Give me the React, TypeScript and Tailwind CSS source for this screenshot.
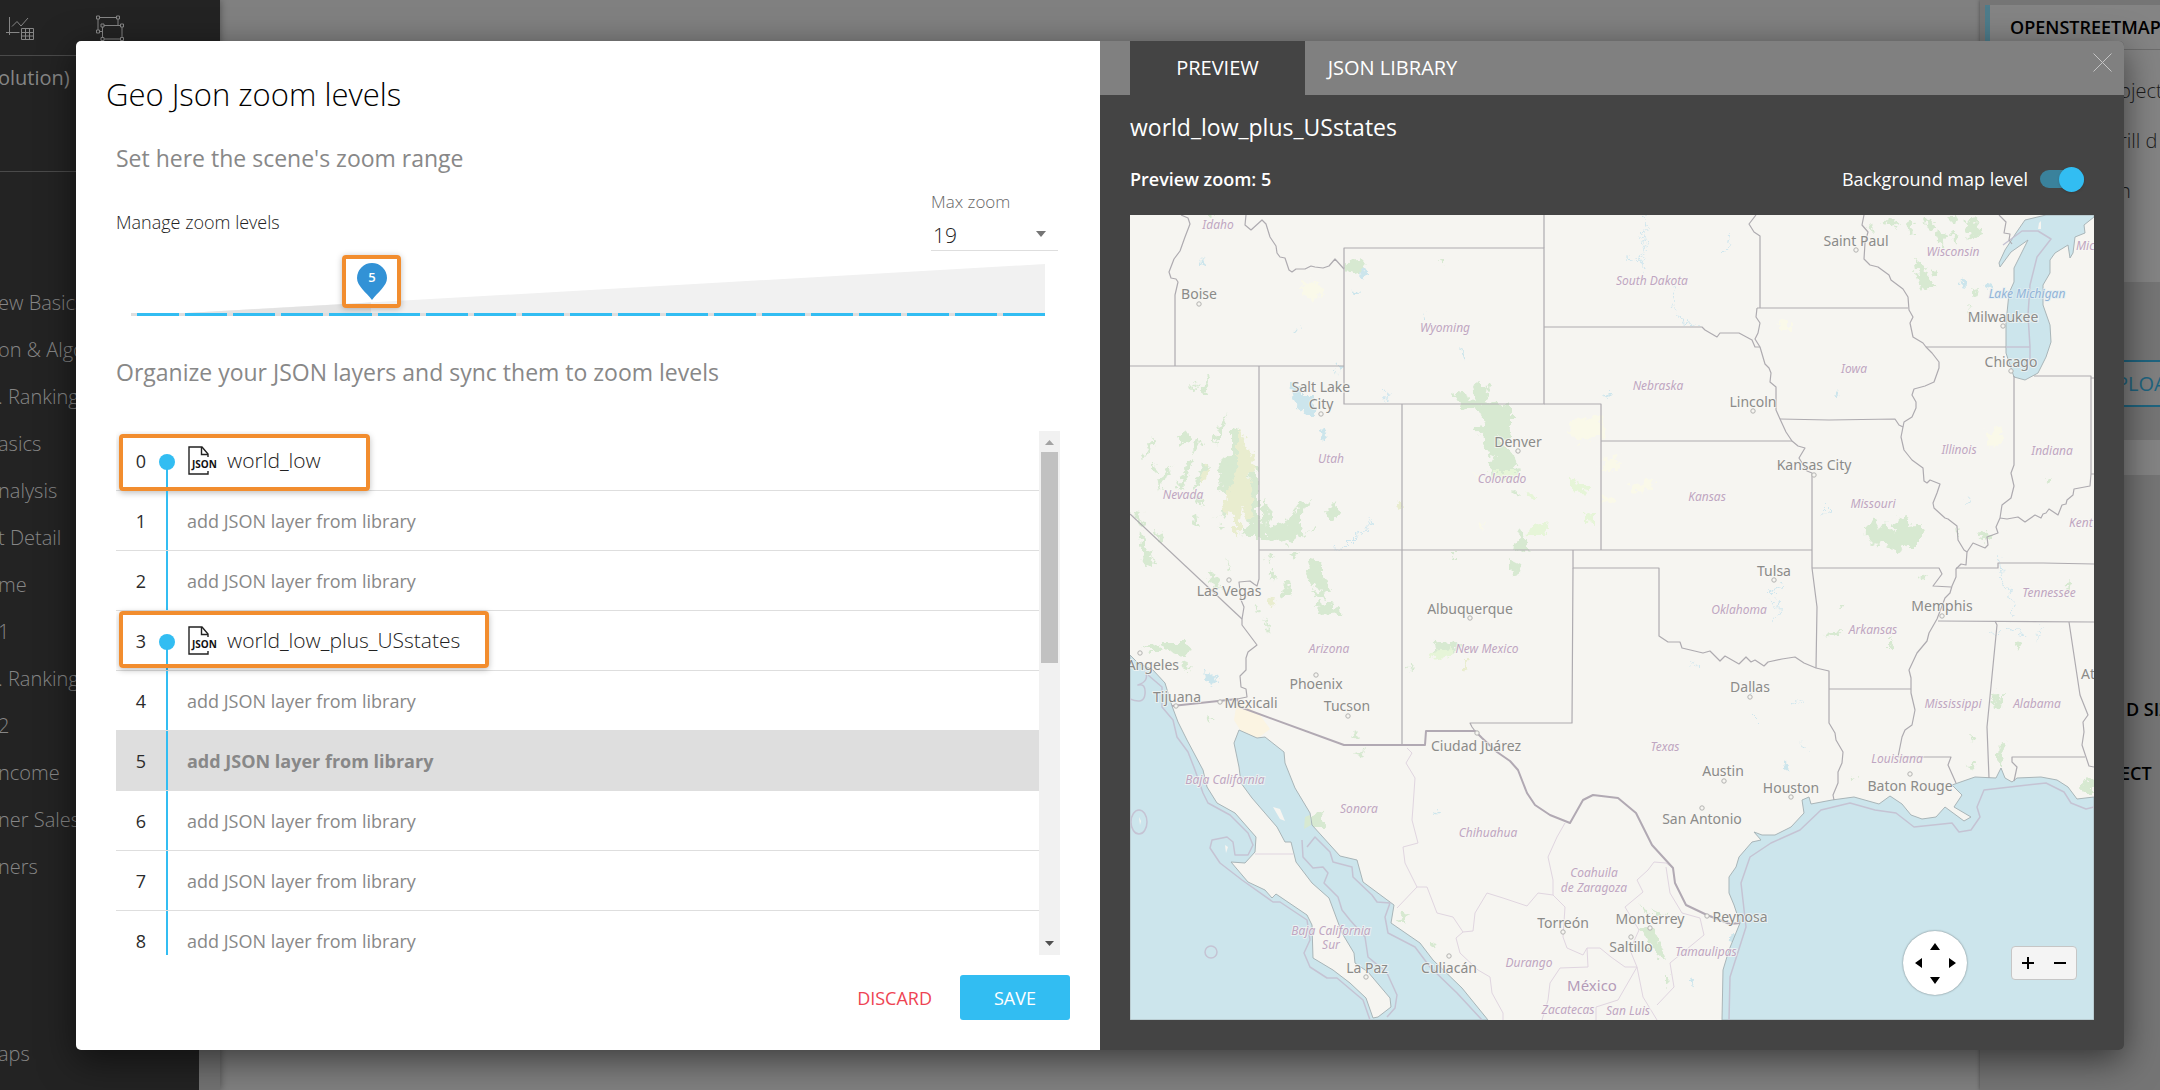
import { useState } from 'react';
import clsx from 'clsx';

const layers: Record<number, string> = { 0: 'world_low', 3: 'world_low_plus_USstates' };
const levels = [0, 1, 2, 3, 4, 5, 6, 7, 8];
const ACTIVE_LEVEL = 5;

const menuItems = [
  'ew Basics', 'on & Algo', '. Ranking', 'asics', 'nalysis', 't Detail', 'me',
  '1', '. Ranking', '2', 'ncome', 'ner Sales', 'ners',
];

/* ---------- map data ---------- */

const stateBorders = [
  'M51 0 58 3 60 9 55 22 50 36 44 44 39 57 41 63 46 64 48 67 45 80 45 151',
  'M116 0 115 10 121 15 132 5 136 9 140 22 146 31 147 38 150 42 155 43 159 55 162 57 166 54 175 54 181 51 185 52 193 53 199 51 205 44 214 54',
  'M214 33H414V189H214Z',
  'M414 0V33',
  'M0 151H214',
  'M129 151V364L127 371 124 369 120 366 109 367 111 385 114 392 112 404 112 410 118 418 127 430 118 437 116 443 116 455 110 461 111 472 116 474 117 482 107 484',
  'M272 189V530',
  'M414 189H471V335',
  'M129 335H682',
  'M471 226H662',
  'M0 299 112 404',
  'M443 335V353H529V421L538 427 550 427 552 433 573 438 580 436 590 446 595 441 609 449 616 442 621 447 625 445 634 451 638 447 652 444 665 442 674 448 686 453 699 456V508L705 518 706 525 713 537 712 548 708 557 708 568 703 580 704 585',
  'M443 353 442 508H340L342 512 345 516',
  'M626 0 619 9 624 17 630 21V93',
  'M627 93H778',
  'M734 0 732 10 738 17 735 28 734 44 740 50 748 52 759 60 761 65 773 74 778 82 779 95 783 102 780 108 783 122 793 128 796 132 802 138 809 147 809 153 804 167 795 171 784 174 782 180 786 187 786 193 782 202 774 207 773 212 771 222 774 235 782 245 793 253 794 266 797 268 800 265 810 269 807 278 803 288 804 293 815 303 818 304 827 311 828 325 834 335 837 337 836 350 831 349 826 354 826 362 822 371 820 378 815 383 807 404 799 418 797 426 787 438 779 455 781 463 781 478 785 495 782 510 775 515 772 522 770 532 768 542H821L818 550 826 568',
  'M627 93 626 102 630 108 628 118 625 124 630 132 635 149 639 153 641 158 640 167 646 172 646 195 650 204 656 217 662 226 668 231 675 233 669 243 677 256 682 258V353L687 392 686 453',
  'M414 112H572L575 115 587 122 590 118H609L622 125 625 132 630 132',
  'M650 204 699 205 765 204 769 210 773 212',
  'M796 132H876',
  'M884 161V250L881 258 884 271 881 283 872 290 870 303 866 312 868 318 857 322 858 330 855 333 843 328 837 337',
  'M904 161H961V259L960 271 944 274 943 280 937 285 936 289 932 290 928 300 919 294 916 298 913 299 911 303 905 300 895 307 888 302 877 304 870 303',
  'M961 259H964M961 163H964',
  'M826 353H868V348H913L964 349',
  'M682 353H809L812 359 803 371 821 372',
  'M699 474H781',
  'M808 406 964 407',
  'M865 406 867 410 857 512 859 563',
  'M939 407 950 480 958 500 953 507 954 517 952 530 959 551 964 552',
  'M955 542H882V547L887 552 884 566',
  'M869 0 876 7 874 18 880 19 879 25 882 29',
];

const countryBorder =
  'M42 491 107 484 110 492 214 530H295L296 516H345L352 523 367 537 380 546 388 555 397 578 405 590 420 600 440 608 453 585 463 580 488 583 506 598 522 630 543 653 545 668 556 690 577 700 600 709 610 708';

const mexicoBorders = [
  'M277 533 282 538 276 548 285 563 283 592 282 605 288 628 273 632 275 648 287 672 267 693',
  'M287 672H297L307 698 323 702 333 717 343 716 345 698 357 678 373 683 397 691 408 678 423 680 423 665 418 642 427 622 435 608',
  'M333 717 326 723 330 738 348 755 360 762 362 778 373 798V805',
  'M423 680 435 692 433 722 437 733 453 740 457 733 458 752 430 753 420 768 418 785 412 805',
  'M457 733H470L481 742 495 752 507 752 513 782 527 805',
  'M543 653 536 648 524 647 518 655 507 665 513 677 495 692 509 715 500 735 507 752 488 785 466 792 466 805',
  'M536 652 540 678 552 698 570 703 574 720 540 748 544 772 527 790',
  'M125 639H163',
];

const pacific =
  'M0 440 8 448 23 455 35 468 42 491 48 507 57 525 73 555 77 572 87 588 105 598 126 622 125 637 115 648 101 647 118 667 135 675 142 683 146 679 177 700 182 710 183 743 203 755 220 768 236 783 243 803 248 802 261 792 260 783 238 757 225 748 224 738 212 718 199 683 182 668 166 647 161 627 155 627 147 612 122 583 111 568 109 552 104 528 109 515 127 523 135 522 154 537 155 548 165 573 180 598 182 610 210 641 227 645 233 667 264 690 261 708 290 728 303 745 332 773 358 805H0Z';
const gulf =
  'M592 805 593 755 599 735 610 708 604 690 599 678 599 662 606 652 609 642 622 627 631 625 624 617 632 620 645 620 661 612 674 598 672 585 679 582 681 589 702 585 724 582 749 589 760 581 772 589 781 600 792 604 806 602 815 592 834 606 841 602 824 592 832 580 822 570 845 562 866 563 871 553 875 563 882 567 887 563 911 562 927 565 938 572 947 584 964 582V805Z';
const lakeMichigan =
  'M895 5 916 0H964V2L954 10 955 18 945 22 943 38 940 43 938 30 925 38 920 45V58L913 70V90L920 110 921 127 916 142 908 158 895 165 884 162 876 138V108L879 78 884 67V53L898 25 881 37 870 52 869 48 875 35 886 18Z';

const maritime = [
  'M18 460 32 472V492L43 505 47 522 58 537 65 555 73 578 78 588 100 600 118 618 123 630 118 640H105L103 627 97 622 82 625 80 633 90 648 112 665 143 687H150L177 705 180 725 174 738 180 752 197 763 207 763 233 785 240 805',
  'M172 625 173 642 183 653 193 652 198 658 194 668 208 682 212 695 220 705 235 722 238 742 257 758 267 780 265 793 257 802',
  'M177 632 185 622 200 637 203 647 222 652 223 662 242 680 247 687 260 688 255 702 258 718 285 732 300 752 327 778 352 805',
  'M599 805 600 762 616 712 611 668 620 642 641 628 670 615 691 595 720 588 745 595 766 598 784 612 822 608 829 617 841 615 850 602 847 592 854 575 916 568 934 577 941 588 956 594 964 592',
  'M0 484Q14 490 15 479T8 470Q20 466 15 456',
  'M873 30 892 16 908 16 921 24 907 42 900 70 898 100 900 132 900 150M876 132H900',
];

const forests = [
  'M216 47 230 46 236 50 230 60 218 56Z',
  'M322 178 330 176 345 186 343 172 352 167 358 172 356 186 382 190 382 214 378 226 368 222 384 240 388 256 376 262 358 256 364 244 355 232 352 222 344 213 355 206 348 194 334 196Z',
  'M102 214 108 212 114 232 108 248 104 290 110 312 120 312 116 296 122 252 128 256 128 304 142 312 155 306 172 308 176 320 156 328 136 322 116 322 112 314 98 290 88 262 92 246 102 240Z',
  'M88 248 98 246 102 270 90 266ZM58 246 64 244 52 276 48 270ZM72 248 78 250 68 272 60 284ZM44 250 36 262 30 276 28 264ZM92 300 102 282 96 300 82 304Z',
  'M22 246 28 250 26 258 22 254ZM12 242 22 222 24 226 14 244ZM60 232 68 224 72 230 64 238ZM60 304 66 298 68 312ZM86 312 96 310 90 316ZM66 278 74 284 74 292 68 288Z',
  'M77 162 80 164 76 178 72 178ZM60 170 68 172 64 178ZM98 196 94 210 86 230 84 222ZM48 222 56 216 60 222 52 232Z',
  'M184 344 192 350 192 362 200 376 196 380 190 374 178 366 176 356ZM182 374 196 378 194 384 184 380ZM186 386 206 392 214 398 190 400Z',
  'M170 288 182 286 170 302 160 318 152 314ZM134 282 138 296 142 300 138 314 130 300ZM194 300 206 286 210 300 200 304ZM178 318 184 312 186 316Z',
  'M76 356 88 364 92 376 82 370ZM12 316 16 326 24 350 18 352 10 336ZM98 345 100 355 96 358ZM0 296 10 298 16 312 6 304ZM24 316 32 322 28 328Z',
  'M140 356 146 358 144 366ZM152 372 158 366 160 380 154 384ZM136 340 144 342 138 346ZM158 340 170 336 164 344ZM124 390 128 394 126 398ZM134 402 138 412 136 416Z',
  'M30 428 56 428 62 438 52 442 38 436ZM52 446 60 450 58 456 50 454ZM10 432 28 430 34 436 20 436ZM76 500 82 504 78 508Z',
  'M302 428 320 426 332 430 322 440 304 442ZM276 454 282 450 280 456ZM224 516 228 520 222 522ZM222 540 236 536 232 542Z',
  'M386 326 392 316 396 322 394 330 402 338 384 336ZM380 345 390 350 388 360 382 358ZM318 338 326 338 326 342ZM382 278 388 276 386 282ZM310 44 316 44 314 50Z',
  'M735 312 745 302 750 314 756 306 762 318 768 304 776 302 780 312 794 310 788 330 776 330 770 338 760 330 752 328 744 330 736 322Z',
  'M784 44 792 50 800 66 806 72 794 76 788 66ZM802 50 808 56 804 62ZM792 8 800 4 806 12 800 16ZM804 24 810 14 818 22 812 30ZM820 18 830 20 826 30ZM754 8 762 2 768 12ZM834 6 848 4 850 20 838 24ZM738 10 744 12 740 16ZM776 6 784 8 780 14ZM816 2 826 2 824 10Z',
  'M778 10 786 18 780 22ZM840 76 848 74 846 84ZM836 90 842 92 838 96ZM758 96 762 98ZM708 386 716 388 710 392ZM694 418 712 416 704 422ZM760 420 764 432 760 436ZM788 362 798 358 794 366Z',
  'M180 602 192 594 194 612 182 612ZM870 528 876 530 872 550 868 550ZM950 568 958 562 964 566V578L954 578ZM884 425 892 428 888 436ZM840 520 846 522 842 528ZM836 550 846 548 842 556ZM720 560 728 564 722 566Z',
  'M510 690 518 696 522 704ZM522 694 536 700 526 702ZM510 712 520 710 528 726 536 746 528 742 518 724ZM536 760 542 766 536 772ZM266 702 280 698 274 706 268 706ZM300 726 306 730 302 736Z',
  'M826 312 830 316 828 324ZM846 318 856 316 862 320 856 326ZM862 486 866 478 870 486 874 478 874 492 864 494ZM75 0H84L80 4ZM916 262 922 264 918 268ZM934 370 942 368 938 376Z',
];
const ochre = [
  'M108 214 112 218 118 236 124 246 120 262 124 300 116 304 112 290 108 325 104 318 104 300 92 292 100 270 108 250Z',
  'M76 250 80 256 74 270 70 262ZM266 284 272 292 268 294ZM136 380 146 386 142 392ZM334 444 338 448 334 456Z',
];
const farmland = [
  'M106 492 112 488 130 500 140 514 128 523 112 518 104 505Z',
];
const paleFields = [
  'M172 66 190 68 194 78 184 84 172 78ZM440 206 470 200 474 220 450 228 438 218ZM472 244 488 242 490 256 474 256ZM648 106 660 104 660 116 648 116ZM856 216 872 212 872 230 858 232Z',
  'M472 280 488 282 484 290 472 288ZM340 258 352 260 346 264ZM350 306 356 308 352 314ZM500 270 524 264 520 274 504 278Z',
];
const lightGreens = [
  'M358 256 386 256 386 264 360 264ZM440 263 446 266 460 272 460 278 440 276ZM455 299 465 297V309L455 308ZM402 312 416 308 414 320 398 320Z',
  'M302 436 324 434 318 442 298 444ZM396 280 404 276 402 284Z',
];
const lakes = [
  'M160 165 168 170 172 180 185 180 184 200 174 200 165 190Z',
  'M232 54 238 56 238 62 230 60ZM190 214 198 216 192 226ZM163 120 170 112 168 118ZM72 42 73 52 70 52ZM206 148 210 150 208 158ZM226 72 228 80 224 80Z',
  'M72 456 86 464 84 470 76 466ZM296 98 298 104 294 104ZM330 132 334 142 332 146ZM92 490H98M102 492H108',
  'M839 282 840 288 837 290ZM705 176 713 180 708 181ZM472 178 482 180 480 182ZM305 592 308 596 306 600Z',
  'M670 528 682 540 674 534ZM652 545 660 552 656 554ZM600 720 608 725 602 735ZM560 760 564 765 562 774ZM830 70 834 62 836 72ZM854 70 862 66 860 78Z',
];
const rivers = [
  'M514 0 518 10 512 20 516 30 510 42 514 55 512 60M498 44 512 46 516 38',
  'M542 70 546 84 542 92 552 106 570 112',
  'M243 304 236 314 226 322 218 330 204 336',
  'M258 176 256 190M650 400 648 384 640 376 652 372',
  'M868 340 870 350 872 366 880 378 884 400',
  'M640 385 650 398 642 408M600 20 596 36 592 40M692 288 700 296 690 300',
  'M862 420 880 412 896 422M905 428 912 410M560 450 568 448M620 480 632 470M660 490 672 486M622 500 632 510',
];

type Place = { name: string; x: number; y: number; dx?: number; dy?: number; anchor?: 'start' | 'end' };

const cities: Place[] = [
  { name: 'Boise', x: 69, y: 84, dx: 69, dy: 89 },
  { name: 'Salt Lake', x: 191, y: 177 },
  { name: 'City', x: 191, y: 194, dx: 191, dy: 199 },
  { name: 'Denver', x: 388, y: 232, dx: 388, dy: 236 },
  { name: 'Las Vegas', x: 99, y: 381, dx: 99, dy: 365 },
  { name: 'Albuquerque', x: 340, y: 399, dx: 340, dy: 403 },
  { name: 'Saint Paul', x: 726, y: 31, dx: 726, dy: 35 },
  { name: 'Milwaukee', x: 873, y: 107, dx: 873, dy: 111 },
  { name: 'Chicago', x: 881, y: 152, dx: 881, dy: 156 },
  { name: 'Lincoln', x: 623, y: 192, dx: 623, dy: 196 },
  { name: 'Kansas City', x: 684, y: 255, dx: 684, dy: 260 },
  { name: 'Tulsa', x: 644, y: 361, dx: 644, dy: 365 },
  { name: 'Memphis', x: 812, y: 396, dx: 812, dy: 401 },
  { name: 'Angeles', x: 49, y: 455, dx: 10, dy: 438, anchor: 'end' },
  { name: 'Tijuana', x: 47, y: 487, dx: 46, dy: 491 },
  { name: 'Mexicali', x: 121, y: 493, dx: 90, dy: 487 },
  { name: 'Phoenix', x: 186, y: 474, dx: 186, dy: 460 },
  { name: 'Tucson', x: 217, y: 496, dx: 218, dy: 501 },
  { name: 'Ciudad Juárez', x: 346, y: 536, dx: 347, dy: 518 },
  { name: 'Torreón', x: 433, y: 713, dx: 433, dy: 717 },
  { name: 'La Paz', x: 237, y: 758, dx: 236, dy: 762 },
  { name: 'Culiacán', x: 319, y: 758, dx: 319, dy: 741 },
  { name: 'Dallas', x: 620, y: 477, dx: 620, dy: 482 },
  { name: 'At', x: 951, y: 464, anchor: 'start' },
  { name: 'Austin', x: 593, y: 561, dx: 594, dy: 566 },
  { name: 'Houston', x: 661, y: 578, dx: 661, dy: 582 },
  { name: 'Baton Rouge', x: 780, y: 576, dx: 780, dy: 559 },
  { name: 'San Antonio', x: 572, y: 609, dx: 572, dy: 593 },
  { name: 'Monterrey', x: 520, y: 709, dx: 520, dy: 713 },
  { name: 'Reynosa', x: 610, y: 707, dx: 577, dy: 701 },
  { name: 'Saltillo', x: 501, y: 737, dx: 501, dy: 722 },
];

const regions: Place[] = [
  { name: 'Idaho', x: 88, y: 14 },
  { name: 'Wyoming', x: 315, y: 117 },
  { name: 'Nevada', x: 53, y: 284 },
  { name: 'Utah', x: 201, y: 248 },
  { name: 'Colorado', x: 372, y: 268 },
  { name: 'South Dakota', x: 522, y: 70 },
  { name: 'Wisconsin', x: 823, y: 41 },
  { name: 'Mic', x: 946, y: 35, anchor: 'start' },
  { name: 'Iowa', x: 724, y: 158 },
  { name: 'Nebraska', x: 528, y: 175 },
  { name: 'Kansas', x: 577, y: 286 },
  { name: 'Missouri', x: 743, y: 293 },
  { name: 'Illinois', x: 829, y: 239 },
  { name: 'Indiana', x: 922, y: 240 },
  { name: 'Kent', x: 939, y: 312, anchor: 'start' },
  { name: 'Oklahoma', x: 609, y: 399 },
  { name: 'Tennessee', x: 919, y: 382 },
  { name: 'Arizona', x: 199, y: 438 },
  { name: 'New Mexico', x: 357, y: 438 },
  { name: 'Baja California', x: 95, y: 569 },
  { name: 'Sonora', x: 229, y: 598 },
  { name: 'Chihuahua', x: 358, y: 622 },
  { name: 'Coahuila', x: 464, y: 662 },
  { name: 'de Zaragoza', x: 464, y: 677 },
  { name: 'Baja California', x: 201, y: 720 },
  { name: 'Sur', x: 201, y: 734 },
  { name: 'Durango', x: 399, y: 752 },
  { name: 'Zacatecas', x: 438, y: 799 },
  { name: 'San Luis', x: 498, y: 800 },
  { name: 'Arkansas', x: 743, y: 419 },
  { name: 'Mississippi', x: 823, y: 493 },
  { name: 'Alabama', x: 907, y: 493 },
  { name: 'Texas', x: 535, y: 536 },
  { name: 'Louisiana', x: 767, y: 548 },
  { name: 'Tamaulipas', x: 576, y: 741 },
];

function MapView() {
  return (
    <svg
      viewBox="0 0 964 805"
      preserveAspectRatio="xMidYMid slice"
      className="block h-full w-full bg-[#f6f5f1] font-['Noto_Sans',sans-serif]"
      aria-label="Map preview"
    >
      <defs>
        {/* roughens the outlines of woods and lakes */}
        <filter id="rough" filterUnits="userSpaceOnUse" x="0" y="0" width="964" height="805">
          <feTurbulence type="fractalNoise" baseFrequency="0.14" numOctaves="3" seed="4" result="noise" />
          <feDisplacementMap in="SourceGraphic" in2="noise" scale="14" xChannelSelector="R" yChannelSelector="G" />
        </filter>
      </defs>
      <g filter="url(#rough)">
        <g fill="#faf9e9">{paleFields.map((d) => <path key={d} d={d} />)}</g>
        <g fill="#d7e9d1">{forests.map((d) => <path key={d} d={d} />)}</g>
        <g fill="#e9edcf">{ochre.map((d) => <path key={d} d={d} />)}</g>
        <g fill="#e6f5d8">{lightGreens.map((d) => <path key={d} d={d} />)}</g>
        <g fill="#cce5ec">{lakes.map((d) => <path key={d} d={d} />)}</g>
        <g fill="none" stroke="#cfe6ee">{rivers.map((d) => <path key={d} d={d} />)}</g>
      </g>
      <g fill="#fbf4e2">{farmland.map((d) => <path key={d} d={d} />)}</g>
      <g fill="#cce5ec" stroke="#a9b5b8" strokeWidth="1">
        <path d={pacific} />
        <path d={gulf} />
        <path d={lakeMichigan} />
      </g>
      <g fill="none" stroke="#c5c3d3" strokeWidth="1.5" strokeLinejoin="round">
        {maritime.map((d) => <path key={d} d={d} />)}
        <ellipse cx="9" cy="607" rx="8" ry="12" />
        <circle cx="81" cy="737" r="6" />
      </g>
      <g fill="#f6f5f1">
        <path d="M143 592 150 594 155 606 150 604ZM95 630 98 632 96 638ZM9 602 11 606 10 610ZM909 8 911 6 911 14 908 14Z" />
      </g>
      <g fill="#d7e9d1"><path d="M175 602 180 600 181 610 174 614Z" /></g>
      <g fill="none" stroke="#e0d5e0" strokeWidth="1">
        {mexicoBorders.map((d) => <path key={d} d={d} />)}
      </g>
      <g fill="none" stroke="#aeabb0" strokeWidth="1.2" strokeLinejoin="round">
        {stateBorders.map((d) => <path key={d} d={d} />)}
      </g>
      <path d={countryBorder} fill="none" stroke="#b1a9b3" strokeWidth="2" strokeLinejoin="round" />

      <g fill="#f6f5f1" stroke="#b3b3b1">
        {cities.map((c) => c.dx !== undefined && <circle key={c.name} cx={c.dx} cy={c.dy} r="2.2" />)}
      </g>
      <g fontSize="14" fill="#8b8b89" stroke="#f8f7f4" strokeWidth="2" strokeOpacity="0.7" paintOrder="stroke">
        {cities.map((c) => (
          <text key={c.name} x={c.x} y={c.y} textAnchor={c.anchor ?? 'middle'}>{c.name}</text>
        ))}
      </g>
      <g fontSize="12" fontStyle="italic" fill="#bfa6c1" stroke="#f8f7f4" strokeWidth="2" strokeOpacity="0.7" paintOrder="stroke">
        {regions.map((r) => (
          <text key={`${r.name}-${r.y}`} x={r.x} y={r.y} textAnchor={r.anchor ?? 'middle'}>{r.name}</text>
        ))}
        <text x="462" y="776" fontSize="15" fontStyle="normal" textAnchor="middle" fill="#b49bb8">México</text>
        <text x="897" y="83" textAnchor="middle" fill="#92b4d8" stroke="#e4eff2">Lake Michigan</text>
      </g>
    </svg>
  );
}

function JsonFileIcon() {
  return (
    <svg width="30" height="30" viewBox="0 0 30 30" className="shrink-0" aria-hidden="true">
      <path d="M20 11V8L14 1H1V28H20V25" fill="none" stroke="#222" strokeWidth="1.4" />
      <path d="M13.500 1V8.500H20" fill="none" stroke="#222" strokeWidth="1.4" />
      <text x="4" y="22" fontSize="10" fontWeight="700" fill="#111" className="font-['Open_Sans',sans-serif]">JSON</text>
    </svg>
  );
}

/* ---------- app behind the dialog ---------- */

function Sidebar() {
  return (
    <aside className="flex w-[220px] shrink-0 flex-col overflow-hidden bg-[#232323] text-[#868686] shadow-[0_0_8px_rgba(0,0,0,0.4)]">
      <div className="flex h-14 shrink-0 items-center border-b border-[#4a4a4a]">
        <svg width="28" height="26" viewBox="0 0 28 26" className="ml-1.5 shrink-0" fill="none" stroke="#868686" aria-hidden="true">
          <path d="M3.500 2V20M0 17.500H13.500M6 11.500 11 6.500 15 11 22 3" />
          <path d="M15.500 13.500H27.500V24.500H15.500ZM19.500 13.500V24.500M23.500 13.500V24.500M15.500 17.500H27.500M15.500 21H27.500" />
        </svg>
        <svg width="28" height="26" viewBox="0 0 28 26" className="ml-[62px] shrink-0" fill="#232323" stroke="#868686" aria-hidden="true">
          <path d="M2 2.500H22V10M2 2.500V16.500H6" />
          <path d="M6.500 10.500H26V24H6.500Z" />
          <path d="M.5 1H3.500V4H.5ZM20.500 1H23.500V4H20.500ZM.5 15H3.500V18H.5ZM5 9H8V12H5ZM24.500 9H27.500V12H24.500ZM5 22.500H8V25.500H5ZM24.500 22.500H27.500V25.500H24.500Z" />
        </svg>
      </div>
      <div className="-ml-0.5 h-[116px] shrink-0 border-b border-[#4a4a4a] pt-1 text-xl leading-9">olution)</div>
      <div className="flex min-h-0 flex-1">
        <ul className="-ml-0.5 w-[201px] pt-[107px] text-xl font-light">
          {menuItems.map((item, i) => (
            <li key={i} className="h-[47px] whitespace-nowrap leading-[47px]">{item}</li>
          ))}
          <li className="mt-[140px] h-[47px] leading-[47px]">aps</li>
        </ul>
        <div className="flex-1 bg-[#727272]" />
      </div>
    </aside>
  );
}

function PropertiesPanel() {
  return (
    <aside className="flex w-[180px] shrink-0 flex-col overflow-hidden whitespace-nowrap bg-[#757575] pt-[5px] text-[#1c1c1c] shadow-[0_0_4px_rgba(0,0,0,0.4)]">
      <div className="ml-[5px] flex h-[45px] shrink-0 items-center border-b border-l-[5px] border-[#6c6c6c] border-l-[#4d7c8b] bg-[#848484] pl-5 text-lg font-semibold text-black">
        OPENSTREETMAP
      </div>
      <div className="h-[232px] shrink-0 bg-[#848484] pt-4 pl-[139px] text-xl font-light leading-[50px]">
        <p>bject</p>
        <p>rill d</p>
        <p>n</p>
      </div>
      <div className="h-[158px] shrink-0 pt-[78px]">
        <button type="button" className="h-[47px] w-full overflow-hidden border-y-2 border-[#1f6580] bg-[#808080] pl-[136px] text-left text-xl text-[#1f6580]">
          PLOA
        </button>
      </div>
      <div className="h-[35px] shrink-0 bg-[#848484]" />
      <div className="flex flex-1 flex-col gap-8 pt-[218px] pl-[140px] text-lg font-semibold leading-8 text-black">
        <p className="pl-1.5">D SIZ</p>
        <p>ECT</p>
      </div>
    </aside>
  );
}

/* ---------- dialog, left side ---------- */

function ZoomSlider() {
  return (
    <div className="relative mr-[55px] ml-[55px]">
      <svg viewBox="0 0 914 62" preserveAspectRatio="none" className="block h-[62px] w-full" aria-hidden="true">
        <path d="M55 62 914 13V62Z" fill="#f1f1f1" />
        <path d="M55 62 240 51.500V62Z" fill="#e3e3e3" />
      </svg>
      <div className="flex h-[3px]">
        {Array.from({ length: 19 }).map((_, i) => (
          <div key={i} className="flex-1 border-l-[6px] border-[#dedede] bg-[#32bdf2]" />
        ))}
      </div>
      <div className="absolute top-1 left-[211px] flex h-[53px] w-[59px] justify-center rounded border-4 border-[#f28d2e] pt-1 shadow-[0_1px_6px_rgba(0,0,0,0.25)]">
        <svg width="30" height="38" viewBox="0 0 30 38" aria-label="Zoom level 5">
          <path d="M15 0A15 15 0 0 1 30 15C30 23 21 29 15 37C9 29 0 23 0 15A15 15 0 0 1 15 0Z" fill="#3292d6" />
          <text x="15" y="19" fontSize="13" fontWeight="600" textAnchor="middle" fill="#fff">5</text>
        </svg>
      </div>
    </div>
  );
}

function LayerRow({ level }: { level: number }) {
  const layer = layers[level];
  const active = level === ACTIVE_LEVEL;

  return (
    <li
      className={clsx(
        'relative flex h-15 shrink-0 items-center border-b border-[#dedede] text-lg',
        active && 'bg-[#dedede]',
      )}
    >
      <span className="w-[50px] text-center text-[#2b2b2b]">{level}</span>
      <span className="relative flex h-full w-0.5 shrink-0 flex-col justify-end">
        <span className={clsx('bg-[#32bdf2]', layer ? 'h-1/2' : 'h-full')} />
        {layer && <span className="absolute top-[23px] left-[-7px] size-4 rounded-full bg-[#32bdf2]" />}
      </span>
      {layer ? (
        <span className="ml-5 flex items-center gap-[9px] text-[21px] font-light text-[#222]">
          <JsonFileIcon />
          {layer}
        </span>
      ) : (
        <span className={clsx('ml-[19px] text-[#888]', active && 'font-bold')}>add JSON layer from library</span>
      )}
      {level === 0 && (
        <span className="absolute top-[3px] left-[3px] h-[57px] w-[251px] rounded border-4 border-[#f28d2e] shadow-[0_2px_6px_rgba(0,0,0,0.25)]" />
      )}
      {level === 3 && (
        <span className="absolute top-0 left-[3px] h-[57px] w-[370px] rounded border-4 border-[#f28d2e] shadow-[0_2px_6px_rgba(0,0,0,0.25)]" />
      )}
    </li>
  );
}

function Scrollbar() {
  return (
    <div className="flex w-[21px] shrink-0 flex-col items-center bg-[#f1f1f1]">
      <svg width="9" height="21" viewBox="0 0 9 21" aria-hidden="true"><path d="M0 14 4.500 9 9 14Z" fill="#a3a3a3" /></svg>
      <div className="h-[211px] w-[17px] bg-[#c1c1c1]" />
      <svg width="9" height="21" viewBox="0 0 9 21" className="mt-auto" aria-hidden="true"><path d="M0 7 4.500 12 9 7Z" fill="#505050" /></svg>
    </div>
  );
}

function LevelsPane() {
  return (
    <section className="flex min-w-0 flex-1 flex-col bg-white pt-[33px] pb-[30px]">
      <h1 className="px-[30px] text-[31px] font-light leading-10 text-black">Geo Json zoom levels</h1>
      <h2 className="mt-7 px-10 text-[23px] leading-8 text-[#888]">Set here the scene's zoom range</h2>

      <div className="mt-4 flex items-end justify-between pr-[42px] pl-10">
        <p className="mb-[15px] text-lg font-light leading-7 text-[#222]">Manage zoom levels</p>
        <div className="w-[127px]">
          <label htmlFor="max-zoom" className="block text-[17px] font-light leading-6 text-[#666]">Max zoom</label>
          <div className="relative mt-[5px]">
            <select
              id="max-zoom"
              defaultValue="19"
              className="block h-8 w-full appearance-none border-b border-[#dedede] bg-transparent pl-0.5 text-[21px] font-light leading-7 text-[#222]"
            >
              <option>19</option>
              <option>18</option>
            </select>
            <svg width="10" height="6" viewBox="0 0 10 6" className="pointer-events-none absolute top-3 right-3" aria-hidden="true">
              <path d="M0 0H10L5 6Z" fill="#757575" />
            </svg>
          </div>
        </div>
      </div>

      <ZoomSlider />

      <h2 className="mt-10 px-10 text-[23px] leading-8 text-[#888]">Organize your JSON layers and sync them to zoom levels</h2>

      <div className="mx-10 mt-[43px] flex min-h-0 flex-1 overflow-hidden">
        <ul className="min-w-0 flex-1">
          {levels.map((level) => <LayerRow key={level} level={level} />)}
        </ul>
        <Scrollbar />
      </div>

      <div className="mt-5 flex justify-end gap-7 pr-[30px] text-lg">
        <button type="button" className="h-[45px] text-[#ee4453]">DISCARD</button>
        <button type="button" className="h-[45px] w-[110px] rounded-[3px] bg-[#32bdf2] text-white">SAVE</button>
      </div>
    </section>
  );
}

/* ---------- dialog, right side ---------- */

function MapControls() {
  return (
    <div className="absolute right-[17px] bottom-[25px] flex items-center gap-11">
      <button type="button" aria-label="Pan" className="size-16 rounded-full bg-white shadow-[0_0_2px_rgba(0,0,0,0.5)]">
        <svg viewBox="0 0 64 64" className="size-16" aria-hidden="true">
          <path d="M32 12 37 19H27ZM32 53 37 46H27ZM12 32 19 27V37ZM53 32 46 27V37Z" />
        </svg>
      </button>
      <div className="flex h-[34px] w-[66px] items-center justify-around rounded border border-[#c6c6c6] bg-[#f4f4f4]">
        <button type="button" aria-label="Zoom in">
          <svg width="12" height="12" viewBox="0 0 12 12" stroke="#000" strokeWidth="2"><path d="M0 6H12M6 0V12" /></svg>
        </button>
        <button type="button" aria-label="Zoom out">
          <svg width="12" height="12" viewBox="0 0 12 12" stroke="#000" strokeWidth="2"><path d="M0 6H12" /></svg>
        </button>
      </div>
    </div>
  );
}

function PreviewPane() {
  const [tab, setTab] = useState('PREVIEW');
  const [background, setBackground] = useState(true);

  return (
    <section className="flex min-w-0 flex-1 flex-col bg-[#444] text-white">
      <div className="relative flex h-[54px] shrink-0 bg-[#808080] pl-[30px] text-xl">
        {['PREVIEW', 'JSON LIBRARY'].map((name) => (
          <button
            key={name}
            type="button"
            onClick={() => setTab(name)}
            className={clsx('w-[175px]', tab === name && 'bg-[#444]')}
          >
            {name}
          </button>
        ))}
        <button type="button" aria-label="Close" className="absolute top-3 right-3">
          <svg width="19" height="19" viewBox="0 0 19 19" stroke="#c4c4c4"><path d="M.5.500 18.500 18.500M18.500.500.500 18.500" /></svg>
        </button>
      </div>

      <div className="flex min-h-0 flex-1 flex-col px-[30px] pb-[30px]">
        <h2 className="mt-4 text-[23px] leading-8">world_low_plus_USstates</h2>
        <div className="mt-4 flex h-10 items-center justify-between">
          <p className="text-lg font-semibold">Preview zoom: 5</p>
          <label className="flex items-center gap-3 pr-2.5 text-lg">
            Background map level
            <input
              type="checkbox"
              checked={background}
              onChange={() => setBackground(!background)}
              className="peer sr-only"
            />
            <span className="flex h-[18px] w-11 items-center rounded-full bg-[#3a829c]">
              <span className={clsx('size-[25px] rounded-full bg-[#32bdf2] shadow', background && 'ml-auto')} />
            </span>
          </label>
        </div>
        <div className="relative mt-4 min-h-0 flex-1">
          <MapView />
          <MapControls />
        </div>
      </div>
    </section>
  );
}

export default function App() {
  return (
    <div className="relative h-screen overflow-hidden bg-[#808080] font-['Open_Sans',sans-serif]">
      <div className="flex h-full">
        <Sidebar />
        <main className="flex-1" />
        <PropertiesPanel />
      </div>

      <div className="absolute inset-0 flex pt-[41px] pr-9 pb-10 pl-[76px]">
        <div role="dialog" aria-label="Geo Json zoom levels" className="flex flex-1 overflow-hidden rounded-[5px] shadow-[0_10px_36px_rgba(0,0,0,0.55)]">
          <LevelsPane />
          <PreviewPane />
        </div>
      </div>
    </div>
  );
}
